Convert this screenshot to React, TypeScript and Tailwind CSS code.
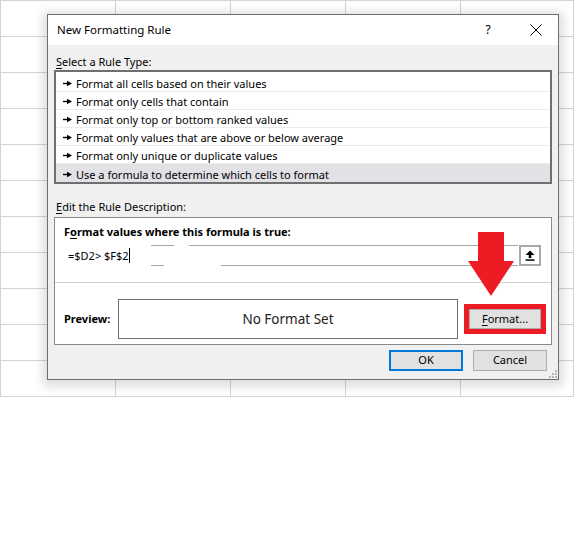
import React from "react";

const rows = [
  "Format all cells based on their values",
  "Format only cells that contain",
  "Format only top or bottom ranked values",
  "Format only values that are above or below average",
  "Format only unique or duplicate values",
  "Use a formula to determine which cells to format",
];

function RowArrow() {
  return (
    <svg width="9" height="7" viewBox="0 0 9 7" className="shrink-0">
      <rect x="0" y="2.8" width="5" height="1.4" fill="#000" />
      <polygon points="4,0.8 9,3.5 4,6.2" fill="#000" />
    </svg>
  );
}

export default function App() {
  const cells = Array.from({ length: 55 });
  return (
    <div
      className="relative w-[576px] h-[534px] bg-white overflow-hidden text-black"
      style={{ fontFamily: '"Noto Sans", "Open Sans", sans-serif' }}
    >
      {/* spreadsheet grid */}
      <div className="w-[574px] border-l border-t border-[#d4d4d4] grid grid-cols-[115px_115px_115px_115px_113px] auto-rows-[36px]">
        {cells.map((_, i) => (
          <div key={i} className="border-r border-b border-[#d4d4d4]" />
        ))}
      </div>

      {/* dialog */}
      <div className="absolute left-[47px] top-[14px] w-[512px] h-[366px] border border-[#6e6e6e] bg-[#f0f0f0] shadow-[0_2px_10px_4px_rgba(0,0,0,0.14)] flex flex-col">
        {/* title bar */}
        <div className="h-[30px] bg-white flex items-center pl-[9px] text-[11.5px]">
          <span className="flex-1">New Formatting Rule</span>
          <span className="w-[12px] text-center text-[12px] mr-[36px]">?</span>
          <svg width="12" height="12" viewBox="0 0 12 12" className="mr-[16px]">
            <path d="M0.5 0.5 L11.5 11.5 M11.5 0.5 L0.5 11.5" stroke="#000" strokeWidth="1" />
          </svg>
        </div>

        {/* body */}
        <div className="relative flex-1 flex flex-col px-[6px] text-[11px]">
          <div className="h-[16px] leading-[16px] mt-[9px] pl-[2px]">
            <span className="underline underline-offset-2">S</span>elect a Rule Type:
          </div>
          <div className="h-[114px] border-2 border-[#6f6f6f] bg-white pt-[2px]">
            {rows.map((r, i) => (
              <div
                key={r}
                className={
                  i < 5
                    ? "h-[18px] border-b border-[#ececec] flex items-center pl-[7px] gap-[4px] pt-[2px]"
                    : "h-[18px] bg-[#e1e1e6] flex items-center pl-[7px] gap-[4px] pt-[2px]"
                }
              >
                <RowArrow />
                <span className="leading-none">{r}</span>
              </div>
            ))}
          </div>

          <div className="h-[16px] leading-[16px] mt-[15px] pl-[2px]">
            <span className="underline underline-offset-2">E</span>dit the Rule Description:
          </div>

          {/* description panel */}
          <div className="mt-[2px] h-[128px] border border-[#8a8a8a] bg-white flex flex-col">
            <div className="h-[16px] leading-[16px] mt-[6px] pl-[9px] font-bold">
              F<span className="underline underline-offset-2">o</span>rmat values where this formula is true:
            </div>
            <div className="relative mt-[5px] h-[21px] flex items-center">
              <span className="pl-[13px] leading-none">=$D2&gt; $F$2</span>
              <span className="w-px h-[15px] bg-black" />
              {/* broken input borders */}
              <div className="absolute top-0 left-[96px] w-[23px] h-px bg-[#a6a6a6]" />
              <div className="absolute top-0 left-[134px] w-[329px] h-px bg-[#a6a6a6]" />
              <div className="absolute bottom-0 left-[96px] w-[13px] h-px bg-[#a6a6a6]" />
              <div className="absolute bottom-0 left-[166px] w-[297px] h-px bg-[#a6a6a6]" />
              <div className="absolute top-0 left-[464px] w-[22px] h-[21px] border-2 border-[#a8a8a8] bg-white flex items-center justify-center">
                <svg width="10" height="11" viewBox="0 0 10 11">
                  <polygon points="5,0.5 9.5,5 6.3,5 6.3,8 3.7,8 3.7,5 0.5,5" fill="#000" />
                  <rect x="0.5" y="9.3" width="9" height="1.5" fill="#000" />
                </svg>
              </div>
            </div>
            <div className="mt-[16px] h-px bg-[#cfcfcf]" />
            <div className="mt-[16px] flex items-center">
              <div className="w-[63px] pl-[9px] font-bold">Preview:</div>
              <div className="w-[340px] h-[40px] border border-[#707070] flex items-center justify-center text-[13.5px] text-[#222]">
                No Format Set
              </div>
              <div className="ml-[6px] w-[82px] h-[30px] border-[5px] border-[#ed1c24] flex">
                <div className="flex-1 border border-[#adadad] bg-[#e1e1e1] flex items-center justify-center">
                  <span>
                    <span className="underline underline-offset-2">F</span>ormat...
                  </span>
                </div>
              </div>
            </div>
          </div>

          {/* buttons */}
          <div className="mt-[5px] flex justify-end gap-[10px] pr-[5px]">
            <div className="w-[74px] h-[21px] border-2 border-[#0078d7] bg-[#e1e1e1] flex items-center justify-center">
              OK
            </div>
            <div className="w-[74px] h-[21px] border border-[#adadad] bg-[#e1e1e1] flex items-center justify-center">
              Cancel
            </div>
          </div>

          {/* size grip */}
          <svg width="8" height="8" viewBox="0 0 8 8" className="absolute right-[1px] bottom-[1px]">
            <rect x="6" y="0" width="2" height="2" fill="#b5b5b5" />
            <rect x="3" y="3" width="2" height="2" fill="#b5b5b5" />
            <rect x="6" y="3" width="2" height="2" fill="#b5b5b5" />
            <rect x="0" y="6" width="2" height="2" fill="#b5b5b5" />
            <rect x="3" y="6" width="2" height="2" fill="#b5b5b5" />
            <rect x="6" y="6" width="2" height="2" fill="#b5b5b5" />
          </svg>
        </div>
      </div>

      {/* red annotation arrow */}
      <svg
        width="50"
        height="68"
        viewBox="0 0 50 68"
        className="absolute left-[466px] top-[230px]"
      >
        <polygon
          points="12,2 38,2 38,31 48,31 25,66 2,31 12,31"
          fill="#ed1c24"
        />
      </svg>
    </div>
  );
}
